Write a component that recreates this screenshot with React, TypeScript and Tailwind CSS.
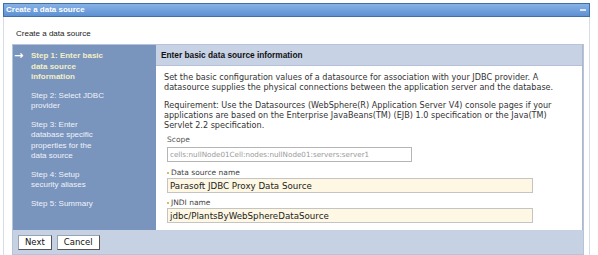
import React from "react";

const steps = [
  { label: ["Step 1: Enter basic", "data source", "information"], current: true },
  { label: ["Step 2: Select JDBC", "provider"] },
  { label: ["Step 3: Enter", "database specific", "properties for the", "data source"] },
  { label: ["Step 4: Setup", "security aliases"] },
  { label: ["Step 5: Summary"] },
];

const App = () => {
  return (
    <div className="w-[598px] h-[255px] bg-white overflow-hidden font-['Liberation_Sans',Arial,sans-serif]">
      <div className="pt-[3px] px-[3px] w-[593px]">
        {/* title bar */}
        <div className="h-[14px] flex items-center justify-between bg-gradient-to-b from-[#86b2e6] to-[#5e90d2] border border-[#3f6ea9] pl-[2px] pr-[3px]">
          <span className="text-white font-bold text-[8px] leading-none">Create a data source</span>
          <span className="w-[6px] h-[2px] bg-[#dbe7f6]" />
        </div>
        <div className="border-x border-[#d7dde6] h-[240px] pl-[8px] pr-[5px]">
          <div className="h-[27px] pt-[13px] pl-[4px] text-[8px] leading-none text-[#222]">
            Create a data source
          </div>
          <div className="border border-[#b7c4d8]">
            <div className="flex h-[185px]">
              {/* steps */}
              <div className="w-[143px] bg-[#7a95bd] pt-[6px] flex flex-col gap-[8px]">
                {steps.map((s, i) => (
                  <div key={i} className="flex">
                    <span className="w-[18px] pl-[1px] text-[11px] font-bold leading-[10.5px] text-white font-['DejaVu_Sans',sans-serif]">
                      {s.current ? "→" : ""}
                    </span>
                    <div
                      className={
                        s.current
                          ? "text-[8px] leading-[10.5px] font-bold text-[#f3efc6]"
                          : "text-[8px] leading-[10.5px] text-[#eef2fa]"
                      }
                    >
                      {s.label.map((l) => (
                        <div key={l}>{l}</div>
                      ))}
                    </div>
                  </div>
                ))}
              </div>
              {/* content */}
              <div className="flex-1 flex flex-col border-r border-[#a9b8cf]">
                <div className="h-[21px] bg-[#c7d2e5] flex items-center pl-[5px] text-[8.3px] font-bold text-[#111] border-b border-[#b3c0d6]">
                  Enter basic data source information
                </div>
                <div className="flex-1 bg-white pl-[8px] pt-[6px] font-['DejaVu_Sans',sans-serif] text-[#333] text-[8.1px] leading-[10px]">
                  <p>
                    Set the basic configuration values of a datasource for association with your JDBC provider. A
                    <br />
                    datasource supplies the physical connections between the application server and the database.
                  </p>
                  <p className="mt-[8px]">
                    Requirement: Use the Datasources (WebSphere(R) Application Server V4) console pages if your
                    <br />
                    applications are based on the Enterprise JavaBeans(TM) (EJB) 1.0 specification or the Java(TM)
                    <br />
                    Servlet 2.2 specification.
                  </p>
                  <div className="mt-[5px] pl-[3px]">
                    <div className="text-[#555] text-[7.5px]">Scope</div>
                    <div className="mt-[2px] w-[245px] h-[15px] border border-[#b5b5b5] flex items-center pl-[2px] text-[#9a9a9a] text-[7.2px]">
                      cells:nullNode01Cell:nodes:nullNode01:servers:server1
                    </div>
                    <div className="mt-[6px] text-[#444] text-[7.5px] flex items-center gap-[2px]">
                      <span className="w-[2px] h-[2px] rounded-full bg-[#c9a23c]" />
                      Data source name
                    </div>
                    <div className="w-[366px] h-[15px] bg-[#fdf7e3] border border-[#c4c4c4] flex items-center pl-[2px] text-[#222] text-[8.7px]">
                      Parasoft JDBC Proxy Data Source
                    </div>
                    <div className="mt-[5px] text-[#444] text-[7.5px] flex items-center gap-[2px]">
                      <span className="w-[2px] h-[2px] rounded-full bg-[#c9a23c]" />
                      JNDI name
                    </div>
                    <div className="w-[366px] h-[15px] bg-[#fdf7e3] border border-[#c4c4c4] flex items-center pl-[2px] text-[#222] text-[8.7px]">
                      jdbc/PlantsByWebSphereDataSource
                    </div>
                  </div>
                </div>
              </div>
            </div>
            {/* footer */}
            <div className="h-[24px] bg-[#c6d1e4] flex items-center gap-[5px] pl-[5px] font-['DejaVu_Sans',sans-serif]">
              <button className="h-[15px] px-[6px] bg-white border border-[#9aa3b0] border-r-[#555] border-b-[#555] text-[8.5px] text-[#111]">
                Next
              </button>
              <button className="h-[15px] px-[6px] bg-white border border-[#9aa3b0] border-r-[#555] border-b-[#555] text-[8.5px] text-[#111]">
                Cancel
              </button>
            </div>
          </div>
        </div>
      </div>
    </div>
  );
};

export default App;
